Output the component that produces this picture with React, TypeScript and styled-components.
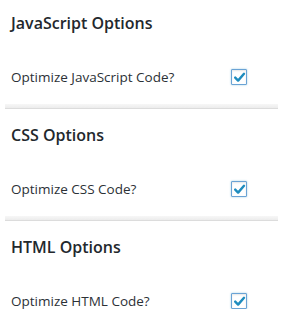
import React from "react";
import styled, { createGlobalStyle } from "styled-components";

const Global = createGlobalStyle`
  html, body { margin: 0; padding: 0; background: #fff; }
  body { font-family: "Open Sans", "Noto Sans", sans-serif; }
`;

const Page = styled.div`
  padding-top: 13px;
  width: 286px;
`;

const Section = styled.section`
  display: flex;
  flex-direction: column;
`;

const Heading = styled.h3`
  margin: 0 0 0 11px;
  font-size: 16px;
  line-height: 20px;
  font-weight: 600;
  color: #23282d;
`;

const Row = styled.div`
  margin-top: 36px;
  display: grid;
  grid-template-columns: 220px 16px;
  align-items: center;
  height: 16px;
  padding-left: 11px;
`;

const Label = styled.span`
  font-size: 13.5px;
  line-height: 16px;
  color: #2c3136;
  white-space: nowrap;
`;

const Box = styled.span`
  width: 16px;
  height: 16px;
  box-sizing: border-box;
  border: 1px solid #6aa3d5;
  border-radius: 1px;
  background: #fff;
  box-shadow: inset 0 1px 2px rgba(0, 0, 0, 0.1), 0 0 2px rgba(30, 140, 190, 0.45);
  display: flex;
  align-items: center;
  justify-content: center;
`;

const Separator = styled.div`
  margin: 19px 8px 16px 5px;
  height: 5px;
  background: linear-gradient(#f7f7f7, #ececec);
  border-bottom: 1px solid #dcdcdc;
  box-sizing: border-box;
`;

const Check = () => (
  <svg width="13" height="13" viewBox="0 0 13 13">
    <path d="M2.2 6.6 L5.1 9.6 L11 2.8" fill="none" stroke="#1e8cbe" strokeWidth="2.4" strokeLinecap="round" strokeLinejoin="round" />
  </svg>
);

const sections = [
  { title: "JavaScript Options", label: "Optimize JavaScript Code?" },
  { title: "CSS Options", label: "Optimize CSS Code?" },
  { title: "HTML Options", label: "Optimize HTML Code?" },
];

export default function App() {
  return (
    <Page>
      <Global />
      {sections.map((s, i) => (
        <Section key={s.title}>
          <Heading>{s.title}</Heading>
          <Row>
            <Label>{s.label}</Label>
            <Box>
              <Check />
            </Box>
          </Row>
          {i < sections.length - 1 && <Separator />}
        </Section>
      ))}
    </Page>
  );
}
